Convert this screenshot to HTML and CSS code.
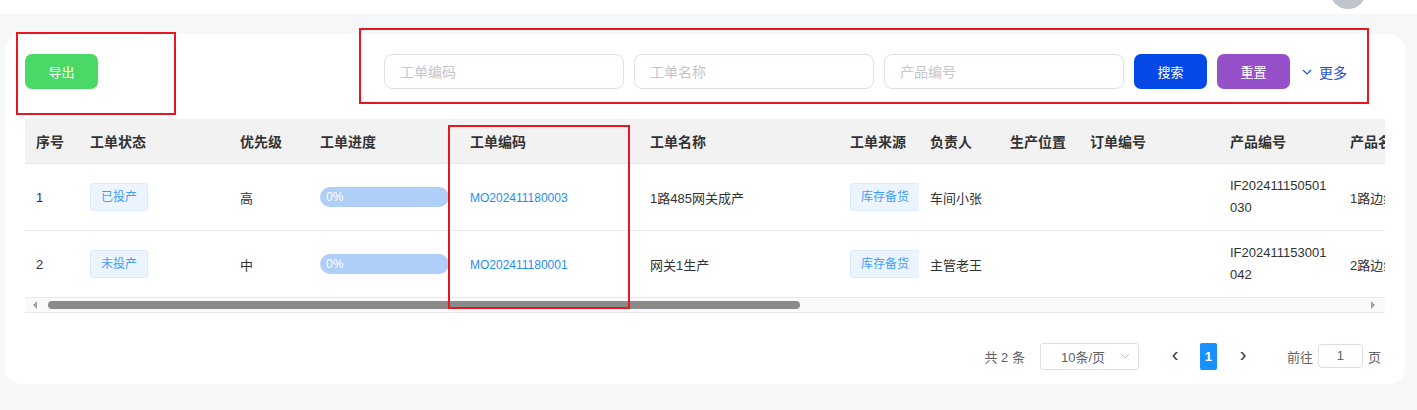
FILE: index.html
```html
<!DOCTYPE html>
<html lang="zh-CN">
<head>
  <meta charset="UTF-8">
  <meta name="viewport" content="width=device-width, initial-scale=1.0">
  <title>工单管理</title>
  <link rel="stylesheet" href="styles.css">
</head>
<body>
  <div class="topbar">
    <span class="avatar"></span>
  </div>

  <div class="card">
    <div class="toolbar">
      <div class="mark mark-export">
        <button class="btn btn-export">导出</button>
      </div>
      <div class="mark mark-search">
        <input class="field" placeholder="工单编码">
        <input class="field" placeholder="工单名称">
        <input class="field" placeholder="产品编号">
        <button class="btn btn-search">搜索</button>
        <button class="btn btn-reset">重置</button>
        <span class="more">
          <svg width="10" height="6" viewBox="0 0 10 6"><path d="M1 1 L5 5 L9 1" fill="none" stroke="#1e4fd6" stroke-width="1.2"/></svg>
          更多
        </span>
      </div>
    </div>

    <div class="table-wrap">
      <div class="mark mark-col"></div>
      <table class="grid">
        <colgroup>
          <col style="width:54px"><col style="width:150px"><col style="width:80px"><col style="width:150px">
          <col style="width:180px"><col style="width:200px"><col style="width:80px"><col style="width:80px">
          <col style="width:80px"><col style="width:140px"><col style="width:120px"><col style="width:150px">
        </colgroup>
        <thead>
          <tr>
            <th>序号</th><th>工单状态</th><th>优先级</th><th>工单进度</th><th>工单编码</th><th>工单名称</th>
            <th>工单来源</th><th>负责人</th><th>生产位置</th><th>订单编号</th><th>产品编号</th><th>产品名称</th>
          </tr>
        </thead>
        <tbody>
          <tr>
            <td>1</td>
            <td><span class="tag">已投产</span></td>
            <td>高</td>
            <td><div class="progress"><span>0%</span></div></td>
            <td><a class="code">MO202411180003</a></td>
            <td>1路485网关成产</td>
            <td><span class="tag">库存备货</span></td>
            <td>车间小张</td>
            <td></td>
            <td></td>
            <td class="wrap">IF202411150501030</td>
            <td>1路边缘网关</td>
          </tr>
          <tr>
            <td>2</td>
            <td><span class="tag">未投产</span></td>
            <td>中</td>
            <td><div class="progress"><span>0%</span></div></td>
            <td><a class="code">MO202411180001</a></td>
            <td>网关1生产</td>
            <td><span class="tag">库存备货</span></td>
            <td>主管老王</td>
            <td></td>
            <td></td>
            <td class="wrap">IF202411153001042</td>
            <td>2路边缘网关</td>
          </tr>
        </tbody>
      </table>
      <div class="hscroll">
        <span class="arrow arrow-left"></span>
        <span class="thumb"></span>
        <span class="arrow arrow-right"></span>
      </div>
    </div>

    <div class="pager">
      <span class="total">共 2 条</span>
      <span class="size">10条/页
        <svg width="10" height="6" viewBox="0 0 10 6"><path d="M1 1 L5 5 L9 1" fill="none" stroke="#c0c4cc" stroke-width="1"/></svg>
      </span>
      <span class="nav nav-prev">&#8249;</span>
      <span class="page">1</span>
      <span class="nav">&#8250;</span>
      <span class="jump">前往</span>
      <span class="jump-box">1</span>
      <span class="unit">页</span>
    </div>
  </div>
</body>
</html>
```

FILE: styles.css
```css
body {
  margin: 0;
  background: #f6f7f9;
  font-family: "Liberation Sans", "Noto Sans CJK SC", sans-serif;
  color: #303133;
  overflow: hidden;
}
.topbar {
  position: relative;
  height: 14px;
  background: #fff;
}
.avatar {
  position: absolute;
  left: 1330px;
  top: -27px;
  width: 36px;
  height: 36px;
  border-radius: 50%;
  background: #bfc4cd;
}
.card {
  margin: 20px 12px 0 5px;
  padding: 20px 20px 14px;
  background: #fff;
  border-radius: 16px;
}
.mark {
  position: relative;
}
.mark::after {
  content: "";
  position: absolute;
  border: 2px solid #e8161f;
  pointer-events: none;
}
.toolbar {
  display: flex;
  align-items: center;
  height: 35px;
}
.mark-export::after {
  left: -9px; top: -22px;
  width: 156px; height: 79px;
}
.mark-search {
  display: flex;
  align-items: center;
  gap: 10px;
  margin-left: auto;
  margin-right: 38px;
}
.mark-search::after {
  left: -25px; top: -26px;
  width: 1006px; height: 72px;
}
.btn {
  height: 35px;
  width: 73px;
  border: 0;
  border-radius: 7px;
  color: #fff;
  font-family: inherit;
  font-size: 13px;
}
.btn-export { background: #4ad966; }
.btn-search { background: #0448e8; }
.btn-reset { background: #9650c9; }
.field {
  box-sizing: border-box;
  width: 240px;
  height: 35px;
  padding: 0 15px;
  border: 1px solid #dcdfe6;
  border-radius: 8px;
  font-family: inherit;
  font-size: 14px;
}
.field::placeholder { color: #c4c6cc; }
.more {
  display: flex;
  align-items: center;
  gap: 7px;
  margin-left: 2px;
  color: #1e4fd6;
  font-size: 14px;
}
.table-wrap {
  position: relative;
  margin-top: 30px;
  overflow: hidden;
}
.mark-col {
  position: absolute;
  left: 423px; top: 6px;
  z-index: 2;
}
.mark-col::after {
  left: 0; top: 0;
  width: 178px; height: 180px;
}
.grid {
  table-layout: fixed;
  width: 1464px;
  border-collapse: collapse;
  font-size: 13px;
}
.grid th {
  height: 44px;
  padding: 0 0 0 11px;
  background: #f2f2f2;
  color: #333;
  font-size: 14px;
  font-weight: 600;
  text-align: left;
  border-bottom: 1px solid #e4e7ed;
  white-space: nowrap;
  overflow: hidden;
}
.grid td {
  height: 66px;
  padding: 0 10px 0 11px;
  border-bottom: 1px solid #e8eaee;
  white-space: nowrap;
  overflow: hidden;
}
.grid td.wrap {
  white-space: normal;
  word-break: break-all;
  line-height: 22px;
}
.tag {
  display: inline-block;
  height: 26px;
  line-height: 26px;
  padding: 0 10px;
  border: 1px solid #d9ecff;
  border-radius: 3px;
  background: #ecf5ff;
  color: #409eff;
  font-size: 12px;
}
.progress {
  height: 20px;
  border-radius: 10px;
  background: #afcff8;
  color: #fff;
  font-size: 12px;
  line-height: 20px;
}
.progress span { padding-left: 6px; }
.code {
  color: #1f8cf5;
  font-size: 12px;
}
.hscroll {
  position: relative;
  height: 14px;
  background: #fafafa;
  border-bottom: 1px solid #e4e7ed;
}
.thumb {
  position: absolute;
  left: 23px; top: 3px;
  width: 752px; height: 8px;
  border-radius: 4px;
  background: #8a8a8a;
}
.arrow {
  position: absolute;
  top: 3px;
  width: 0; height: 0;
  border-top: 4px solid transparent;
  border-bottom: 4px solid transparent;
}
.arrow-left { left: 8px; border-right: 4px solid #a0a0a0; }
.arrow-right { right: 10px; border-left: 4px solid #a0a0a0; }
.pager {
  display: flex;
  justify-content: flex-end;
  align-items: center;
  margin-top: 29px;
  height: 28px;
  padding-right: 4px;
  font-size: 13px;
  color: #606266;
}
.size {
  box-sizing: border-box;
  display: flex;
  align-items: center;
  justify-content: space-between;
  width: 99px;
  height: 27px;
  margin-left: 15px;
  padding: 0 8px 0 20px;
  border: 1px solid #dcdfe6;
  border-radius: 3px;
}
.nav {
  width: 30px;
  margin-top: -3px;
  font-size: 20px;
  color: #303133;
  text-align: center;
}
.nav-prev { margin-left: 21px; }
.page {
  width: 17px;
  height: 27px;
  line-height: 27px;
  margin: 0 11px 0 10px;
  border-radius: 2px;
  background: #1890ff;
  color: #fff;
  font-weight: 700;
  text-align: center;
}
.jump { margin-left: 29px; }
.jump-box {
  box-sizing: border-box;
  width: 45px;
  height: 24px;
  line-height: 22px;
  margin: 0 5px;
  border: 1px solid #dcdfe6;
  border-radius: 4px;
  text-align: center;
}
```
